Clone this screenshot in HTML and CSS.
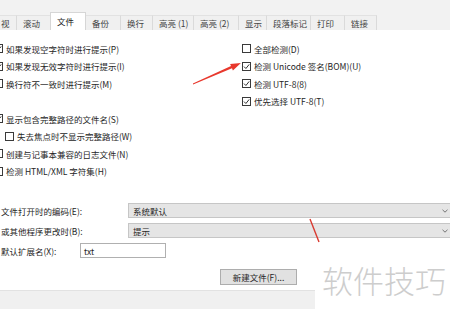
FILE: index.html
```html
<!DOCTYPE html>
<html>
<head>
<meta charset="utf-8">
<link rel="stylesheet" href="styles.css">
</head>
<body>
<div class="top">
  <div class="tabs">
    <div class="tab">视</div>
    <div class="tab">滚动</div>
    <div class="tab active">文件</div>
    <div class="tab">备份</div>
    <div class="tab">换行</div>
    <div class="tab">高亮 (1)</div>
    <div class="tab">高亮 (2)</div>
    <div class="tab">显示</div>
    <div class="tab">段落标记</div>
    <div class="tab">打印</div>
    <div class="tab">链接</div>
  </div>
</div>
<div class="panel">
  <div class="checks">
    <div class="col">
      <div class="row"><span class="cb"><svg viewBox="0 0 7 7"><path d="M1 3.6 L2.9 5.5 L6.2 1.4"/></svg></span>如果发现空字符时进行提示(P)</div>
      <div class="row"><span class="cb"><svg viewBox="0 0 7 7"><path d="M1 3.6 L2.9 5.5 L6.2 1.4"/></svg></span>如果发现无效字符时进行提示(I)</div>
      <div class="row"><span class="cb"></span>换行符不一致时进行提示(M)</div>
      <div class="spacer"></div>
      <div class="row"><span class="cb"><svg viewBox="0 0 7 7"><path d="M1 3.6 L2.9 5.5 L6.2 1.4"/></svg></span>显示包含完整路径的文件名(S)</div>
      <div class="row indent"><span class="cb"></span>失去焦点时不显示完整路径(W)</div>
      <div class="row"><span class="cb"></span>创建与记事本兼容的日志文件(N)</div>
      <div class="row"><span class="cb"></span>检测 HTML/XML 字符集(H)</div>
    </div>
    <div class="col">
      <div class="row"><span class="cb"></span>全部检测(D)</div>
      <div class="row"><span class="cb"><svg viewBox="0 0 7 7"><path d="M1 3.6 L2.9 5.5 L6.2 1.4"/></svg></span>检测 Unicode 签名(BOM)(U)</div>
      <div class="row"><span class="cb"><svg viewBox="0 0 7 7"><path d="M1 3.6 L2.9 5.5 L6.2 1.4"/></svg></span>检测 UTF-8(8)</div>
      <div class="row"><span class="cb"><svg viewBox="0 0 7 7"><path d="M1 3.6 L2.9 5.5 L6.2 1.4"/></svg></span>优先选择 UTF-8(T)</div>
    </div>
  </div>
  <div class="form">
    <div class="frow"><span class="label">文件打开时的编码(E):</span><div class="select"><span>系统默认</span><svg class="chev" viewBox="0 0 6 4"><path d="M0.5 0.8 L3 3.2 L5.5 0.8"/></svg></div></div>
    <div class="frow"><span class="label">或其他程序更改时(B):</span><div class="select"><span>提示</span><svg class="chev" viewBox="0 0 6 4"><path d="M0.5 0.8 L3 3.2 L5.5 0.8"/></svg></div></div>
    <div class="frow"><span class="label short">默认扩展名(X):</span><div class="input">txt</div></div>
  </div>
  <div class="btnrow"><div class="btn">新建文件(F)...</div></div>
  <div class="strip"></div>
</div>
<div class="watermark">软件技巧</div>
<svg class="arrows" viewBox="0 0 450 309">
  <polygon points="192.9,83.6 231.0,66.1 230.1,63.9 240.9,63.1 232.9,70.5 232.0,68.3 193.1,84.4" fill="#e8382d"/>
  <path d="M310 219 L319 242" stroke="#d93a30" stroke-width="1.4" fill="none"/>
</svg>
</body>
</html>
```
FILE: styles.css
```css
body {
  margin: 0;
  width: 450px;
  height: 309px;
  overflow: hidden;
  position: relative;
  background: #fff;
  font-family: "Noto Sans CJK SC", "Noto Sans", sans-serif;
  font-size: 8.5px;
  color: #262626;
}

.top {
  height: 30px;
  background: #f2f2f2;
  display: flex;
  align-items: flex-end;
}

.tabs {
  display: flex;
  align-items: flex-end;
  margin-left: -6px;
}

.tab {
  height: 15px;
  line-height: 15px;
  padding-left: 6px;
  border-left: 1px solid #dadada;
  border-top: 1px solid #e2e2e2;
  background: #f0f0f0;
  box-sizing: border-box;
  white-space: nowrap;
  overflow: hidden;
  color: #444;
  flex: none;
}

.tab:nth-child(1) { width: 22px; }
.tab:nth-child(2) { width: 34px; }
.tab:nth-child(3) { width: 36px; }
.tab:nth-child(4) { width: 34px; }
.tab:nth-child(5) { width: 32px; }
.tab:nth-child(6) { width: 41px; }
.tab:nth-child(7) { width: 45px; }
.tab:nth-child(8) { width: 28px; }
.tab:nth-child(9) { width: 44px; }
.tab:nth-child(10) { width: 34px; }
.tab:nth-child(11) { width: 33px; }

.tab:last-child {
  border-right: 1px solid #dadada;
}

.tab.active {
  height: 18px;
  line-height: 16px;
  background: #fff;
  position: relative;
  z-index: 1;
  border: 1px solid #d6d6d6;
  border-bottom: none;
  color: #222;
}

.tab.active + .tab {
  border-left: none;
}

.panel {
  padding-top: 10px;
}

.checks {
  display: grid;
  grid-template-columns: 248px 1fr;
  margin-left: -6px;
}

.col {
  display: flex;
  flex-direction: column;
}

.row {
  height: 17.5px;
  display: flex;
  align-items: center;
  gap: 3px;
  white-space: nowrap;
}

.row.indent {
  padding-left: 11px;
}

.spacer {
  height: 17.5px;
}

.cb {
  width: 9px;
  height: 9px;
  box-sizing: border-box;
  border: 1px solid #3a3a3a;
  background: #fff;
  flex: none;
  display: flex;
}

.cb svg {
  width: 7px;
  height: 7px;
}

.cb path {
  fill: none;
  stroke: #333;
  stroke-width: 1;
}

.form {
  margin-top: 23px;
}

.frow {
  display: flex;
  align-items: center;
  height: 15px;
  padding-left: 1px;
}

.frow + .frow {
  margin-top: 5px;
}

.label {
  width: 127px;
  flex: none;
  white-space: nowrap;
}

.label.short {
  width: 79px;
}

.select {
  width: 325px;
  height: 15px;
  box-sizing: border-box;
  border: 1px solid #c6c6c6;
  background: #e5e5e5;
  display: flex;
  align-items: center;
  justify-content: space-between;
  padding: 0 4px;
  flex: none;
}

.chev {
  width: 6px;
  height: 4px;
}

.chev path {
  fill: none;
  stroke: #666;
  stroke-width: 0.9;
}

.input {
  width: 86px;
  height: 15px;
  box-sizing: border-box;
  border: 1px solid #b0b0b0;
  background: #fff;
  padding-left: 3px;
  display: flex;
  align-items: center;
  flex: none;
}

.btnrow {
  display: flex;
  padding-left: 220px;
  margin-top: 11px;
}

.btn {
  width: 77px;
  height: 16px;
  box-sizing: border-box;
  border: 1px solid #adadad;
  background: #e1e1e1;
  display: flex;
  align-items: center;
  justify-content: center;
}

.strip {
  margin-top: 5px;
  width: 315px;
  height: 19px;
  box-sizing: border-box;
  background: #f0f0f0;
  border-top: 1px solid #e2e2e2;
}

.watermark {
  position: absolute;
  right: 0;
  bottom: 0;
  width: 135px;
  height: 54px;
  box-sizing: border-box;
  padding-left: 7px;
  padding-bottom: 6px;
  background: #fff;
  font-size: 31px;
  font-weight: 300;
  color: #cdcdcd;
  display: flex;
  align-items: center;
  white-space: nowrap;
}

.arrows {
  position: absolute;
  left: 0;
  top: 0;
  width: 450px;
  height: 309px;
  pointer-events: none;
}
```
